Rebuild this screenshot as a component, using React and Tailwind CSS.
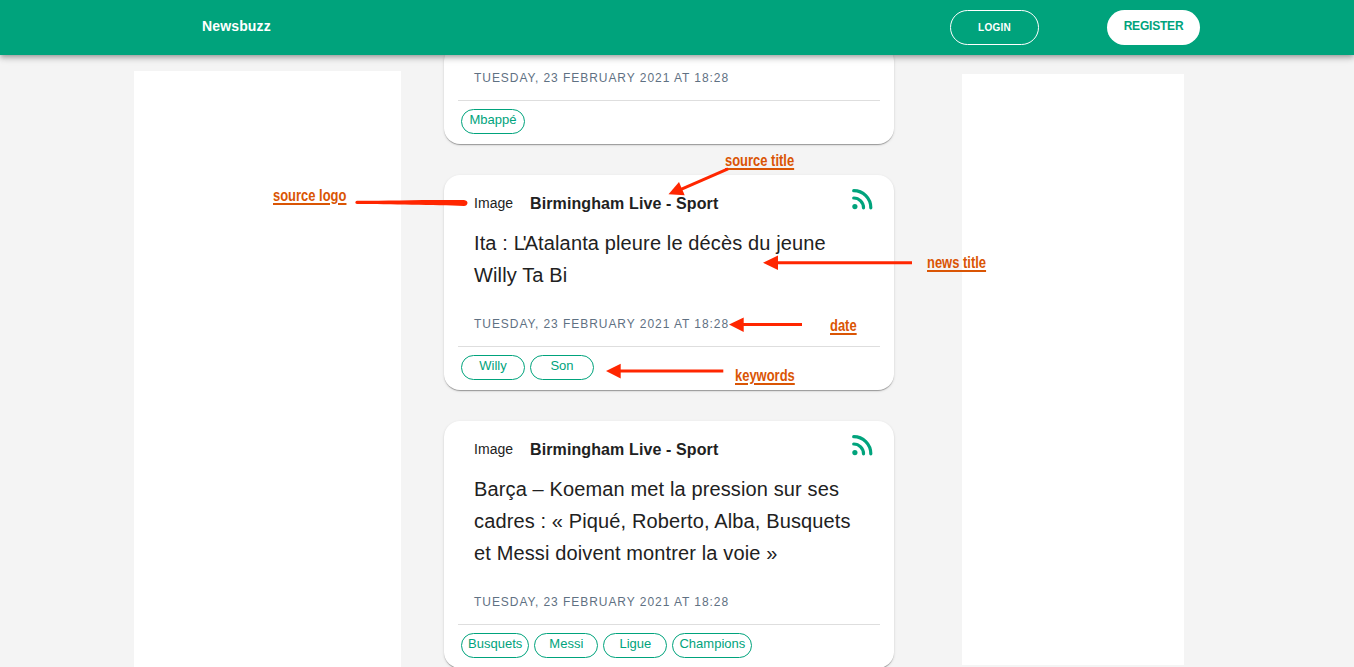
const DATE = "Tuesday, 23 February 2021 at 18:28";

function Chip({ children }) {
  return (
    <span className="flex h-[25px] min-w-[64px] justify-center rounded-full border border-[#00a37c] px-[6px] text-[13px] leading-[19px] tracking-[0.02px] text-[#00a37c]">
      {children}
    </span>
  );
}

function FeedIcon() {
  return (
    <svg className="mt-px size-[21px]" viewBox="0 0 21 21" fill="none" stroke="#00a37c" strokeWidth="3.2" strokeLinecap="round">
      <path d="M1.700 1.700 A17.100 17.100 0 0 1 18.800 18.800" />
      <path d="M1.700 9 A9.800 9.800 0 0 1 11.500 18.800" />
      <circle cx="2.900" cy="17.600" r="2.600" fill="#00a37c" stroke="none" />
    </svg>
  );
}

function NewsCard({ lines, keywords }) {
  return (
    <article className="shrink-0 rounded-2xl bg-white px-[14px] pb-[10px] shadow-[0_2px_1px_-1px_rgba(0,0,0,0.2),0_1px_1px_0_rgba(0,0,0,0.14),0_1px_3px_0_rgba(0,0,0,0.12)]">
      {lines && (
        <>
          <header className="flex h-[52px] items-start pl-4 pr-[7px] pt-[13px]">
            <span className="w-14 pt-1 text-[14px] leading-[22px] tracking-[0.05px]">Image</span>
            <h2 className="grow pt-[2px] text-[16px] font-bold leading-7 tracking-[0.11px]">Birmingham Live - Sport</h2>
            <FeedIcon />
          </header>
          <div className="pl-4 text-[20px] leading-8 tracking-[0.13px]">
            {lines.map((line, i) => (
              <p key={i} className="whitespace-nowrap">{line}</p>
            ))}
          </div>
        </>
      )}
      <time className="mt-[17px] block pl-4 text-[12px] uppercase leading-8 tracking-[0.95px] text-[#5f7183]">{DATE}</time>
      <div className="mt-[6px] border-t border-[#dedede]" />
      <div className="mt-2 flex gap-[5px] pl-[3px]">
        {keywords.map((word) => (
          <Chip key={word}>{word}</Chip>
        ))}
      </div>
    </article>
  );
}

function Note({ className, children }) {
  return (
    <span
      className={`absolute origin-left scale-x-[0.81] whitespace-nowrap text-[16px] font-bold leading-5 text-[#da5504] underline decoration-[1.5px] underline-offset-2 ${className}`}
    >
      {children}
    </span>
  );
}

function Annotations() {
  return (
    <div className="pointer-events-none absolute inset-0">
      <Note className="left-[273px] top-[186px]">source logo</Note>
      <Note className="left-[725px] top-[151px]">source title</Note>
      <Note className="left-[927px] top-[253px]">news title</Note>
      <Note className="left-[830px] top-[316px]">date</Note>
      <Note className="left-[735px] top-[366px]">keywords</Note>
      <svg className="absolute inset-0" width="1354" height="667" fill="#ff2600" stroke="none">
        <path d="M357 200.800 C390 200.700 420 199.700 464 200 Q467.500 200.600 467.500 203 Q467 206 464 206 C435 204.900 390 204.500 357 204 Q355.300 203.700 355.300 202.400 Q355.500 201 357 200.800Z" />
        <path d="M668.500 194.300 L679 182 L684.700 195.200Z" />
        <path d="M681 189.300 L728 168.800" stroke="#ff2600" strokeWidth="3" />
        <path d="M763 262.700 L778 255.500 V270Z M777 261.200 H912 V264.200 H777Z" />
        <path d="M729 324.600 L743.700 317.400 V332Z M743 323.100 H802 V326.100 H743Z" />
        <path d="M606 371 L620.700 363.800 V378.400Z M620 369.500 H723.300 V372.500 H620Z" />
      </svg>
    </div>
  );
}

export default function App() {
  return (
    <div className="relative flex h-[667px] w-[1354px] flex-col overflow-hidden bg-[#f4f4f4] font-['Liberation_Sans',Arial,sans-serif] text-[#212121]">
      <nav className="z-10 flex h-[55px] shrink-0 items-start bg-[#00a37c] pl-[202px] pt-[10px] shadow-[0_2px_4px_-1px_rgba(0,0,0,0.2),0_4px_5px_0_rgba(0,0,0,0.14),0_1px_10px_0_rgba(0,0,0,0.12)]">
        <span className="w-[748px] pt-[6px] text-[14px] font-bold leading-5 tracking-[0.14px] text-white">Newsbuzz</span>
        <button className="h-[35px] w-[89px] rounded-full border border-white text-[10px] font-bold tracking-[0.25px] text-white">LOGIN</button>
        <button className="ml-[68px] h-[35px] w-[93px] rounded-full bg-white pb-[3px] text-[12px] font-bold tracking-[-0.2px] text-[#00a37c]">REGISTER</button>
      </nav>
      <main className="flex min-h-0 grow items-start pl-[134px]">
        <aside className="mt-4 h-[596px] w-[267px] shrink-0 bg-white" />
        <section className="ml-[43px] flex h-[612px] w-[450px] shrink-0 flex-col">
          <div className="-mt-[10px] flex flex-col gap-[31px]">
            <NewsCard keywords={["Mbappé"]} />
            <NewsCard
              lines={[<>Ita : <span className="tracking-[-2px]">L'</span>Atalanta pleure le décès du jeune</>, "Willy Ta Bi"]}
              keywords={["Willy", "Son"]}
            />
            <NewsCard
              lines={["Barça – Koeman met la pression sur ses", "cadres : « Piqué, Roberto, Alba, Busquets", "et Messi doivent montrer la voie »"]}
              keywords={["Busquets", "Messi", "Ligue", "Champions"]}
            />
          </div>
        </section>
        <aside className="ml-[68px] mt-[19px] h-[591px] w-[222px] shrink-0 bg-white" />
      </main>
      <Annotations />
    </div>
  );
}
